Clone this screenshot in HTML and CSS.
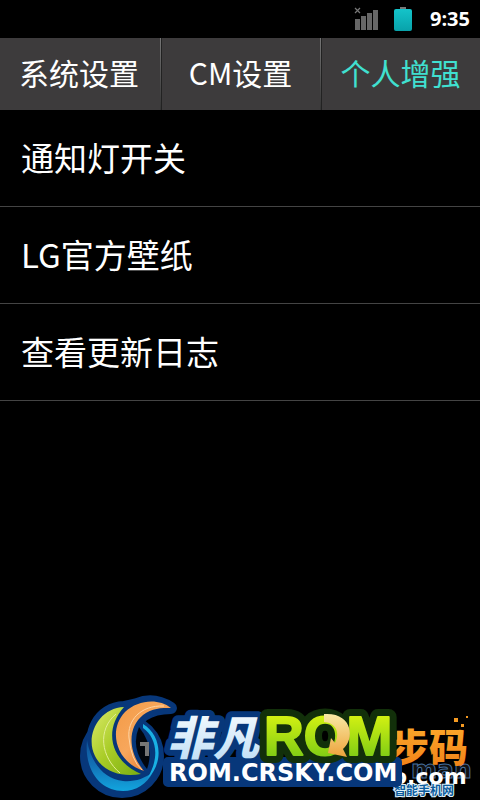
FILE: index.html
```html
<!DOCTYPE html>
<html lang="zh-CN">
<head>
<meta charset="utf-8">
<meta name="viewport" content="width=device-width, initial-scale=1">
<title>个人增强</title>
<link rel="stylesheet" href="styles.css">
</head>
<body>
<header class="status">
  <svg class="signal" width="26" height="24" viewBox="0 0 26 24" aria-hidden="true">
    <path d="M1 1l5 5M6 1l-5 5" stroke="#777" stroke-width="1.2"/>
    <path d="M1 12h5v11H1zM7 9h5v14H7zM13 6h5v17h-5zM19 3h5v20h-5z" fill="#666"/>
  </svg>
  <svg class="battery" width="18" height="24" viewBox="0 0 18 24" aria-hidden="true">
    <defs><linearGradient id="charge" x2="0" y2="1"><stop stop-color="#14c4ca"/><stop offset="1" stop-color="#08a2aa"/></linearGradient></defs>
    <path d="M6 0h6v3H6z" fill="#777"/>
    <rect y="2" width="18" height="22" rx="2" fill="url(#charge)"/>
  </svg>
  <time class="clock">9:35</time>
</header>
<nav class="tabs">
  <button class="tab" type="button">系统设置</button>
  <button class="tab" type="button">CM设置</button>
  <button class="tab active" type="button" aria-current="page">个人增强</button>
</nav>
<main>
  <ul class="list">
    <li><a href="#light">通知灯开关</a></li>
    <li><a href="#wallpaper">LG官方壁纸</a></li>
    <li><a href="#log">查看更新日志</a></li>
  </ul>
</main>
<footer class="brand">
  <svg width="410" height="115" viewBox="70 685 410 115">
    <defs>
      <linearGradient id="lime" x2="0" y2="1"><stop stop-color="#e8fa12"/><stop offset="1" stop-color="#6cc415"/></linearGradient>
      <linearGradient id="leaf" x2="1" y2="1"><stop stop-color="#dceb6b"/><stop offset=".5" stop-color="#a8cc26"/><stop offset="1" stop-color="#79ae12"/></linearGradient>
      <linearGradient id="orange" x2="1" y2="1"><stop stop-color="#f39a45"/><stop offset=".45" stop-color="#f7a75c"/><stop offset="1" stop-color="#e2641c"/></linearGradient>
      <linearGradient id="ring" x2="0" y2="1"><stop stop-color="#0d4f97"/><stop offset=".5" stop-color="#1372b6"/><stop offset="1" stop-color="#12a5de"/></linearGradient>
      <linearGradient id="ice" x2="0" y2="1"><stop stop-color="#fff"/><stop offset="1" stop-color="#b9dcf5"/></linearGradient>
      <linearGradient id="amber" x2="0" y2="1"><stop stop-color="#ffb02e"/><stop offset="1" stop-color="#ef7d16"/></linearGradient>
      <linearGradient id="gold" x2="0" y2="1"><stop stop-color="#f9e9a4"/><stop offset="1" stop-color="#eda33c"/></linearGradient>
    </defs>
    <text class="ghost" x="411" y="778">man</text>
    <text class="side-name" x="390" y="762">步码</text>
    <path d="M454 718h4v4h-4zM461 724h3v3h-3zM466 716h2v2h-2z" fill="#f59a22"/>
    <text class="side-note" x="394" y="795">智能手机网</text>
    <text class="side-url" x="392" y="784">o.com</text>
    <g fill="#07377a" stroke="#07377a" stroke-width="12" stroke-linejoin="round">
      <circle cx="122" cy="756" r="36"/>
      <path d="M124 707C98 708 87 735 95 753C104 771 122 777 141 774L144 771C128 755 124 728 144 715C153 709 162 708 171 708C160 701 149 699 137 704Z"/>
    </g>
    <path d="M168 762H397V782H168Z" fill="#07377a" stroke="#07377a" stroke-width="10" stroke-linejoin="round"/>
    <path d="M139 727Q155 747 147 769Q130 748 139 727Z" fill="#02060d"/>
    <path d="M140 744h7v12" fill="none" stroke="#777" stroke-width="4"/>
    <path d="M87 740C84 770 100 791 123 791C136 791 147 784 153 772C144 779 134 782 123 781C104 779 91 763 87 740Z" fill="url(#ring)"/>
    <path d="M143 724C162 735 164 764 147 779C160 758 157 738 143 728Z" fill="#19b0e4"/>
    <path d="M124 707C98 708 85 737 95 756C104 774 125 777 141 774C114 763 101 733 124 707Z" fill="url(#leaf)"/>
    <path d="M116 714C97 730 101 757 120 773" fill="none" stroke="#e2ed94"/>
    <path d="M171 708C158 698 138 700 125 712C107 731 117 763 144 771C127 751 128 727 143 715C152 708 161 708 171 708Z" fill="url(#orange)"/>
    <path d="M164 706C140 705 127 721 129 738Q131 760 142 770" fill="none" stroke="#ffd5a5"/>
    <text class="cn-logo cn-outline" x="167" y="755">非凡</text>
    <text class="cn-logo" x="167" y="755" fill="url(#ice)" aria-hidden="true">非凡</text>
    <text class="rom rom-outline" x="264" y="755">ROM</text>
    <text class="rom rom-face" x="264" y="755" aria-hidden="true">ROM</text>
    <path d="M324 714C353 712 355 739 343 749L347 757L328 753L331 738L335 743C340 734 337 723 324 722Z" fill="url(#gold)"/>
    <text class="url" x="169" y="781">ROM.CRSKY.COM</text>
  </svg>
</footer>
</body>
</html>
```

FILE: styles.css
```css
* { box-sizing: border-box; }

body {
  margin: 0;
  min-height: 100vh;
  position: relative;
  background: #000;
  color: #fff;
  font-family: "Noto Sans CJK SC", sans-serif;
}

.status {
  height: 38px;
  padding: 0 10px;
  display: flex;
  align-items: center;
  justify-content: flex-end;
}

.signal { margin-right: 14px; }
.battery { margin-right: 18px; }

.clock {
  font-family: "Open Sans", sans-serif;
  font-size: 20px;
  font-weight: 700;
  line-height: 38px;
}

.tabs {
  display: grid;
  grid-template-columns: repeat(3, 1fr);
  background: #3d3b3c;
}

.tab {
  padding: 0 2px 4px 0;
  border: 0;
  background: none;
  color: inherit;
  font: inherit;
  font-size: 30px;
  line-height: 68px;
}

.tab + .tab {
  padding-right: 0;
  border-left: 1px solid;
  border-image: linear-gradient(#777, #333) 1;
  box-shadow: inset 1px 0 #222;
}

.active { color: #40e0d0; }

.list {
  margin: 0;
  padding: 0;
  list-style: none;
}

.list a {
  display: block;
  padding: 0 21px 2px;
  border-bottom: 1px solid #444;
  color: inherit;
  font-size: 33px;
  line-height: 94px;
  text-decoration: none;
}

.brand {
  position: absolute;
  right: 0;
  bottom: 0;
}

.brand svg { display: block; }

.cn-logo {
  font: italic 900 46px "Noto Sans CJK SC", sans-serif;
}

.cn-outline {
  fill: #07377a;
  stroke: #07377a;
  stroke-width: 12px;
  stroke-linejoin: round;
}

.rom { font: 700 55px "Liberation Sans", sans-serif; }

.rom-outline {
  fill: #12300a;
  stroke: #12300a;
  stroke-width: 16px;
  stroke-linejoin: round;
}

.rom-face {
  fill: url(#lime);
  stroke: url(#lime);
  stroke-width: 2px;
  stroke-linejoin: round;
}

.url {
  fill: #fff;
  font: 700 24px "DejaVu Sans", sans-serif;
}

.side-name {
  fill: url(#amber);
  font: 900 39px "Noto Sans CJK SC", sans-serif;
}

.side-url {
  fill: #fff;
  font: 700 22px "DejaVu Sans", sans-serif;
}

.side-note {
  fill: #0c5c9c;
  stroke: #dff0fa;
  stroke-width: 2px;
  paint-order: stroke;
  font: 700 12px "Noto Sans CJK SC", sans-serif;
}

.ghost {
  fill: #111;
  stroke: #456f9f;
  font: 700 25px "DejaVu Sans", sans-serif;
}
```
